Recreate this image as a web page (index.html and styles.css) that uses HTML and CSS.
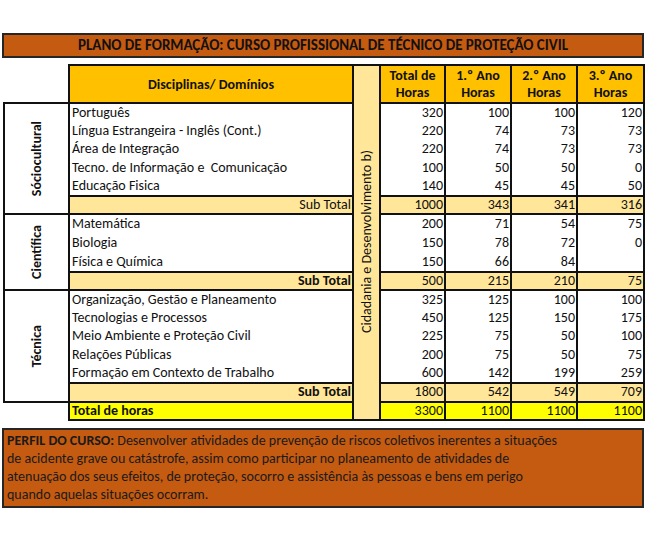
FILE: index.html
```html
<!DOCTYPE html>
<html lang="pt">
<head>
<meta charset="utf-8">
<title>Plano de Formação</title>
<link rel="stylesheet" href="styles.css">
</head>
<body>
<div class="page">
  <div class="title">PLANO DE FORMAÇÃO: CURSO PROFISSIONAL DE TÉCNICO DE PROTEÇÃO CIVIL</div>
  <table class="plan">
    <colgroup>
      <col class="c-cat"><col class="c-name"><col class="c-cid"><col class="c-tot"><col class="c-y1"><col class="c-y2"><col class="c-y3">
    </colgroup>
    <tr class="head">
      <td class="blank"></td>
      <th class="disc">Disciplinas/ Domínios</th>
      <td class="cid" rowspan="18"><div class="vert">Cidadania e Desenvolvimento b)</div></td>
      <th>Total de<br>Horas</th>
      <th>1.º Ano<br>Horas</th>
      <th>2.º Ano<br>Horas</th>
      <th>3.º Ano<br>Horas</th>
    </tr>
    <tr class="row r5 top">
      <td class="cat soc" rowspan="6"><div class="vert b">Sóciocultural</div></td>
      <td class="name">Português</td><td class="n">320</td><td class="n">100</td><td class="n">100</td><td class="n">120</td>
    </tr>
    <tr class="row r5"><td class="name">Língua Estrangeira - Inglês (Cont.)</td><td class="n">220</td><td class="n">74</td><td class="n">73</td><td class="n">73</td></tr>
    <tr class="row r5"><td class="name">Área de Integração</td><td class="n">220</td><td class="n">74</td><td class="n">73</td><td class="n">73</td></tr>
    <tr class="row r5"><td class="name">Tecno. de Informação e&nbsp; Comunicação</td><td class="n">100</td><td class="n">50</td><td class="n">50</td><td class="n">0</td></tr>
    <tr class="row r5"><td class="name">Educação Fisica</td><td class="n">140</td><td class="n">45</td><td class="n">45</td><td class="n">50</td></tr>
    <tr class="sub"><td class="name sublabel">Sub Total</td><td class="n">1000</td><td class="n">343</td><td class="n">341</td><td class="n">316</td></tr>

    <tr class="row r3 top">
      <td class="cat sci" rowspan="4"><div class="vert b">Científica</div></td>
      <td class="name">Matemática</td><td class="n">200</td><td class="n">71</td><td class="n">54</td><td class="n">75</td>
    </tr>
    <tr class="row r3"><td class="name">Biologia</td><td class="n">150</td><td class="n">78</td><td class="n">72</td><td class="n">0</td></tr>
    <tr class="row r3"><td class="name">Física e Química</td><td class="n">150</td><td class="n">66</td><td class="n">84</td><td class="n"></td></tr>
    <tr class="sub"><td class="name sublabel b">Sub Total</td><td class="n">500</td><td class="n">215</td><td class="n">210</td><td class="n">75</td></tr>

    <tr class="row r5 top">
      <td class="cat tec" rowspan="6"><div class="vert b">Técnica</div></td>
      <td class="name">Organização, Gestão e Planeamento</td><td class="n">325</td><td class="n">125</td><td class="n">100</td><td class="n">100</td>
    </tr>
    <tr class="row r5"><td class="name">Tecnologias e Processos</td><td class="n">450</td><td class="n">125</td><td class="n">150</td><td class="n">175</td></tr>
    <tr class="row r5"><td class="name">Meio Ambiente e Proteção Civil</td><td class="n">225</td><td class="n">75</td><td class="n">50</td><td class="n">100</td></tr>
    <tr class="row r5"><td class="name">Relações Públicas</td><td class="n">200</td><td class="n">75</td><td class="n">50</td><td class="n">75</td></tr>
    <tr class="row r5"><td class="name">Formação em Contexto de Trabalho</td><td class="n">600</td><td class="n">142</td><td class="n">199</td><td class="n">259</td></tr>
    <tr class="sub sub-last"><td class="name sublabel b">Sub Total</td><td class="n">1800</td><td class="n">542</td><td class="n">549</td><td class="n">709</td></tr>

    <tr class="total">
      <td class="blank"></td>
      <td class="name b">Total de horas</td><td class="n">3300</td><td class="n">1100</td><td class="n">1100</td><td class="n">1100</td>
    </tr>
  </table>
  <div class="profile">
    <b>PERFIL DO CURSO:</b> Desenvolver atividades de prevenção de riscos coletivos inerentes a situações<br>
    de acidente grave ou catástrofe, assim como participar no planeamento de atividades de<br>
    atenuação dos seus efeitos, de proteção, socorro e assistência às pessoas e bens em perigo<br>
    quando aquelas situações ocorram.
  </div>
</div>
</body>
</html>
```
FILE: styles.css
```css
html, body {
  margin: 0;
  padding: 0;
  background: #ffffff;
}
body {
  font-family: Carlito, Lato, "Liberation Sans", sans-serif;
  font-size: 14px;
  color: #111111;
}
.page {
  padding-top: 33px;
  width: 649px;
}
.title {
  margin: 0 5px 0 2px;
  height: 21px;
  line-height: 21px;
  border: 2px solid #262626;
  background: #c55a11;
  text-align: center;
  font-weight: bold;
  font-size: 15px;
}
.plan {
  margin: 6px 0 0 3px;
  border-collapse: collapse;
  table-layout: fixed;
  width: 640px;
}
.c-cat { width: 65px; }
.c-name { width: 284px; }
.c-cid { width: 27px; }
.c-tot { width: 65px; }
.c-y1 { width: 66px; }
.c-y2 { width: 66px; }
.c-y3 { width: 67px; }

.plan td, .plan th {
  padding: 0;
  border-left: 2px solid #111;
  border-right: 2px solid #111;
  line-height: 16px;
  white-space: nowrap;
  overflow: hidden;
}
.head { height: 38px; }
.head th {
  background: #ffc000;
  font-weight: bold;
  text-align: center;
  border-top: 2px solid #111;
  border-bottom: 2px solid #111;
  line-height: 17px;
}
.blank {
  border: none !important;
  background: #fff;
}
.cid {
  background: #ffe699;
  border: 2px solid #111 !important;
  vertical-align: middle;
  text-align: center;
}
.vert {
  writing-mode: vertical-rl;
  transform: rotate(180deg);
  margin: 0 auto;
  white-space: nowrap;
}
.cid .vert { padding-top: 2px; }
.b { font-weight: bold; }

.cat {
  border: 2px solid #111 !important;
  vertical-align: middle;
  text-align: center;
}
.soc { background: #c5e0b4; }
.sci { background: #a9d18e; }
.tec { background: #548235; }

.r5 { height: 18.6px; }
.r3 { height: 19.3px; }
.row td { background: #fff; }
.name { padding-left: 2px !important; text-align: left; }
.n { text-align: right; padding-right: 1px !important; }

.sub { height: 18px; }
.sub-last { height: 19px; }
.sub td {
  background: #ffe699;
  border-top: 2px solid #111;
  border-bottom: 2px solid #111;
}
.sublabel { text-align: right !important; padding-right: 1px !important; }

.total { height: 16px; }
.total td {
  background: #ffff00;
  border-top: 2px solid #111;
  border-bottom: 2px solid #111;
}
.total td.blank { background: #fff; }

.profile {
  margin: 7px 5px 0 2px;
  border: 2px solid #262626;
  background: #c55a11;
  padding: 2px 3px 2px 3px;
  line-height: 18px;
  font-size: 14px;
  color: #1a1a1a;
}
```
